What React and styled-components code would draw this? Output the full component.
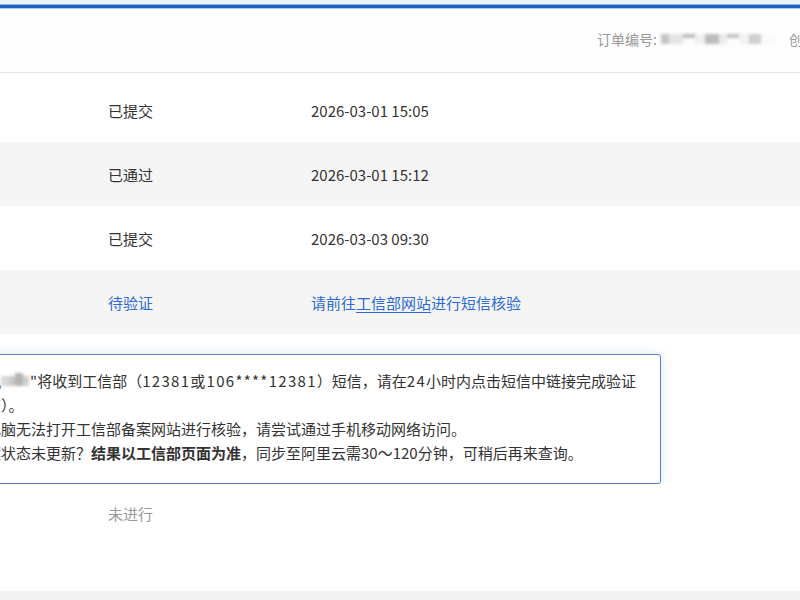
import React from "react";
import styled, { createGlobalStyle } from "styled-components";

const Global = createGlobalStyle`
  html, body { margin: 0; padding: 0; background: #fff; overflow: hidden; }
  body { font-family: "Noto Sans CJK SC", "Microsoft YaHei", sans-serif; color: #333; }
`;

const Page = styled.div`
  width: 800px;
  height: 600px;
  overflow: hidden;
  display: flex;
  flex-direction: column;
  background: #fff;
`;

const TopStrip = styled.div`
  height: 4px;
  background: #eef1f4;
`;

const BlueBar = styled.div`
  height: 3px;
  background: #1b5fc0;
  border-top: 1px solid #8fb4e8;
  border-bottom: 1px solid #a9c7f0;
`;

const Header = styled.div`
  height: 64px;
  display: flex;
  align-items: center;
  padding: 0 0 3px 597px;
  box-sizing: border-box;
  white-space: nowrap;
  overflow: hidden;
  background: #fdfdfd;
  border-bottom: 1px solid #e6e6e6;
  font-size: 14px;
  color: #999;
`;

const Label = styled.span`
  flex: none;
`;

const Smudge = styled.span`
  flex: none;
  display: inline-flex;
  align-items: center;
  width: ${(p) => p.$w}px;
  height: 14px;
  margin: 0 ${(p) => p.$mr || 0}px 0 ${(p) => p.$ml || 0}px;
  filter: blur(1.6px);
  vertical-align: middle;
`;

const Blot = styled.span`
  display: block;
  width: ${(p) => p.$w}px;
  height: ${(p) => p.$h || 10}px;
  margin-top: ${(p) => p.$t || 0}px;
  background: ${(p) => p.$c};
`;

const Table = styled.div`
  margin-top: 5px;
  display: flex;
  flex-direction: column;
`;

const Row = styled.div`
  height: ${(p) => p.$h || 64}px;
  flex: none;
  display: grid;
  grid-template-columns: 108px 203px 1fr;
  align-items: center;
  background: ${(p) => (p.$alt ? "#f5f5f5" : "#fff")};
  font-size: 15px;
  white-space: nowrap;
`;

const Cell = styled.div`
  grid-column: ${(p) => p.$col};
  color: ${(p) => (p.$tone === "blue" ? "#2c6bd5" : p.$tone === "muted" ? "#999" : "#333")};
`;

const Link = styled.a`
  color: #2c6bd5;
  text-decoration: underline;
  text-underline-offset: 3px;
`;

const NoticeArea = styled.div`
  padding-top: 20px;
`;

const Notice = styled.div`
  margin-left: -40px;
  width: 701px;
  height: 130px;
  box-sizing: border-box;
  border: 1px solid #5b80c4;
  border-radius: 3px;
  background: #fff;
  box-shadow: 0 0 12px rgba(90, 140, 230, 0.22);
  padding: 14px 0 0 10px;
  font-size: 15px;
  line-height: 24px;
  color: #333;
`;

const Line = styled.div`
  white-space: nowrap;
  display: flex;
  align-items: center;
`;

const Wide = styled.span`
  letter-spacing: 1.3px;
`;

const Strong = styled.b`
  font-weight: 700;
`;

const Spacer = styled.div`
  flex: 1;
`;

const Footer = styled.div`
  height: 9px;
  background: #f2f2f2;
`;

export default function App() {
  return (
    <Page>
      <Global />
      <TopStrip />
      <BlueBar />
      <Header>
        <Label>订单编号:</Label>
        <Smudge $w={115} $ml={4} $mr={13}>
          <Blot $w={8} $c="#c4c4c4" />
          <Blot $w={14} $c="#e4e4e4" />
          <Blot $w={12} $h={4} $t={-6} $c="#b9b9b9" />
          <Blot $w={10} $c="#f0f0f0" />
          <Blot $w={14} $c="#bcbcbc" />
          <Blot $w={8} $c="#ececec" />
          <Blot $w={12} $h={4} $t={-6} $c="#c2c2c2" />
          <Blot $w={10} $c="#f2f2f2" />
          <Blot $w={12} $c="#cfcfcf" />
          <Blot $w={15} $c="#fafafa" />
        </Smudge>
        <Label>创建时间: 2026-03-01</Label>
      </Header>
      <Table>
        <Row>
          <Cell $col={2}>已提交</Cell>
          <Cell $col={3}>2026-03-01 15:05</Cell>
        </Row>
        <Row $alt>
          <Cell $col={2}>已通过</Cell>
          <Cell $col={3}>2026-03-01 15:12</Cell>
        </Row>
        <Row>
          <Cell $col={2}>已提交</Cell>
          <Cell $col={3}>2026-03-03 09:30</Cell>
        </Row>
        <Row $alt>
          <Cell $col={2} $tone="blue">待验证</Cell>
          <Cell $col={3} $tone="blue">
            请前往<Link>工信部网站</Link>进行短信核验
          </Cell>
        </Row>
      </Table>
      <NoticeArea>
        <Notice>
          <Line>
            手机
            <Smudge $w={28} $ml={0} $mr={1}>
              <Blot $w={8} $c="#d8d8d8" />
              <Blot $w={6} $c="#c8c8c8" />
              <Blot $w={8} $h={13} $t={-3} $c="#b4b4b4" />
              <Blot $w={6} $c="#d0d0d0" />
            </Smudge>
            "将收到工信部（<Wide>12381或106****12381</Wide>）短信，请在<Wide>24</Wide>小时内点击短信中链接完成验证
          </Line>
          <Line>提交）。</Line>
          <Line>若电脑无法打开工信部备案网站进行核验，请尝试通过手机移动网络访问。</Line>
          <Line>
            备案状态未更新？<Strong>结果以工信部页面为准</Strong>，同步至阿里云需30～120分钟，可稍后再来查询。
          </Line>
        </Notice>
      </NoticeArea>
      <Row $h={58}>
        <Cell $col={2} $tone="muted">未进行</Cell>
      </Row>
      <Spacer />
      <Footer />
    </Page>
  );
}
